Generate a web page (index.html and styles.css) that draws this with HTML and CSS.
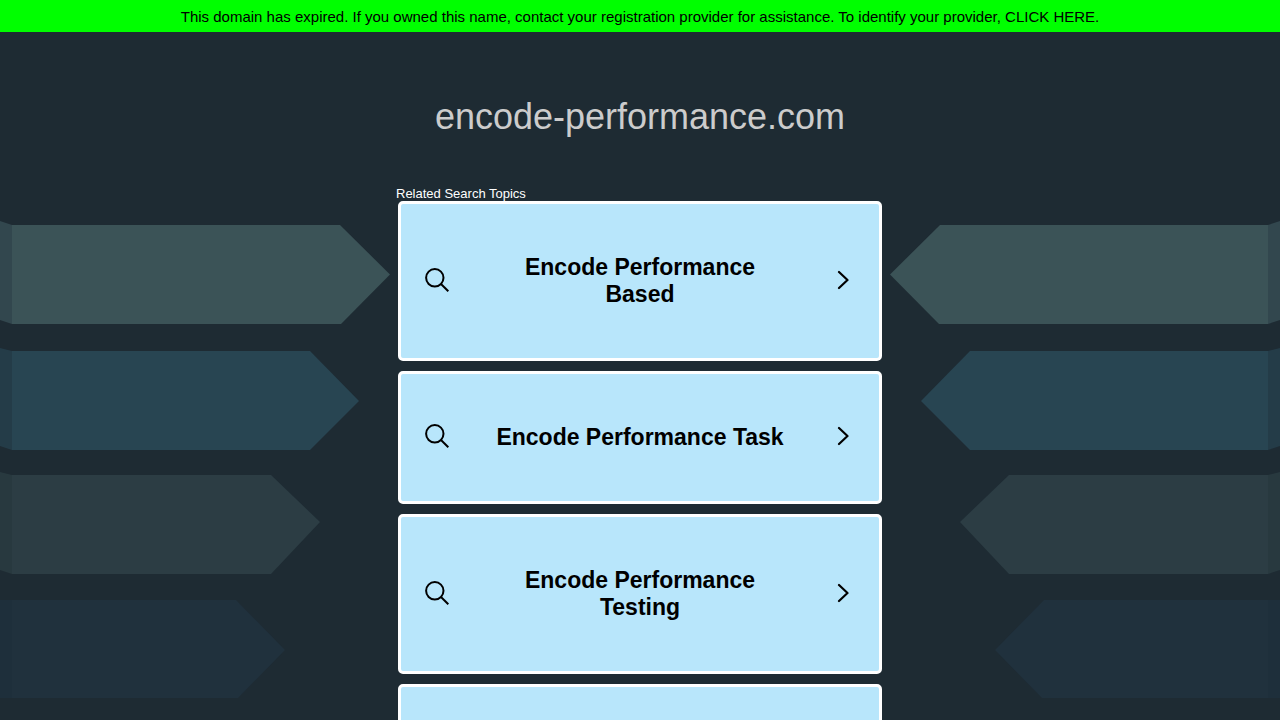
FILE: index.html
```html
<!DOCTYPE html>
<html lang="en">
<head>
    <meta charset="UTF-8">
    <meta name="viewport" content="width=device-width, initial-scale=1.0">
    <title>encode-performance.com</title>
    <link rel="stylesheet" href="styles.css">
</head>
<body>
    <!-- shared shapes -->
    <svg class="defs" width="0" height="0" aria-hidden="true">
        <symbol id="arrows" viewBox="0 0 390 480">
            <path fill="#32474e" d="M0 1l12 4v99l-12-4z"/>
            <path fill="#3b5357" d="M12 5h328l50 49.500-49 49.500H12z"/>
            <path fill="#243c48" d="M0 128l12 3v99l-12-4z"/>
            <path fill="#284552" d="M12 131h298l49 50-49 49H12z"/>
            <path fill="#28393f" d="M0 252l12 3v99l-12-4z"/>
            <path fill="#2c3d44" d="M12 255h259l49 47-49 52H12z"/>
            <path fill="#1e2f3b" d="M0 380h12v98H0z"/>
            <path fill="#20313d" d="M12 380h224l49 50-47 48H12z"/>
        </symbol>
        <symbol id="search" viewBox="0 0 24 24">
            <circle cx="9.800" cy="9.800" r="8.700" fill="none" stroke="#000" stroke-width="2"/>
            <path d="M16 16l7.300 7.300" fill="none" stroke="#000" stroke-width="2"/>
        </symbol>
        <symbol id="chevron" viewBox="0 0 12 20">
            <path d="M2 2l8.500 8L2 18" fill="none" stroke="#000" stroke-width="2.200" stroke-linecap="round" stroke-linejoin="round"/>
        </symbol>
    </svg>

    <div class="banner">
        This domain has expired. If you owned this name, contact your registration provider for assistance. To identify your provider, <a href="#">CLICK HERE.</a>
    </div>

    <main class="page">
        <svg class="arrows arrows-left" aria-hidden="true"><use href="#arrows"/></svg>
        <svg class="arrows arrows-right" aria-hidden="true"><use href="#arrows"/></svg>

        <h1 class="domain">encode-performance.com</h1>

        <div class="topics">
            <h2 class="topics-title">Related Search Topics</h2>
            <a class="topic" href="#">
                <svg class="icon-search" aria-hidden="true"><use href="#search"/></svg>
                <span class="topic-text">Encode Performance Based</span>
                <svg class="icon-chevron" aria-hidden="true"><use href="#chevron"/></svg>
            </a>
            <a class="topic" href="#">
                <svg class="icon-search" aria-hidden="true"><use href="#search"/></svg>
                <span class="topic-text">Encode Performance Task</span>
                <svg class="icon-chevron" aria-hidden="true"><use href="#chevron"/></svg>
            </a>
            <a class="topic" href="#">
                <svg class="icon-search" aria-hidden="true"><use href="#search"/></svg>
                <span class="topic-text">Encode Performance Testing</span>
                <svg class="icon-chevron" aria-hidden="true"><use href="#chevron"/></svg>
            </a>
            <a class="topic" href="#">
                <svg class="icon-search" aria-hidden="true"><use href="#search"/></svg>
                <span class="topic-text">Encode Performance Test</span>
                <svg class="icon-chevron" aria-hidden="true"><use href="#chevron"/></svg>
            </a>
        </div>
    </main>
</body>
</html>
```
FILE: styles.css
```css
body {
    margin: 0;
    background-color: #1e2b33;
    font-family: Arial, "Liberation Sans", sans-serif;
}
.defs {
    position: absolute;
}
.banner {
    background-color: #00ff00;
    color: #000;
    padding: 9px 8px 7px;
    font-size: 15px;
    line-height: 16px;
    text-align: center;
}
.banner a {
    color: #000;
    text-decoration: none;
}
.page {
    position: relative;
    overflow: hidden;
    padding: 64px 0 10px;
}
/* decoration behind the list */
.arrows {
    position: absolute;
    top: 188px;
    width: 390px;
    height: 480px;
}
.arrows-left {
    left: 0;
}
.arrows-right {
    right: 0;
    transform: scaleX(-1);
}
.domain {
    margin: 0 0 48px;
    color: #ccc;
    font-size: 36px;
    font-weight: normal;
    line-height: 42px;
    text-align: center;
}
.topics {
    position: relative;
    display: flex;
    flex-direction: column;
    gap: 10px;
    max-width: 484px;
    margin: 0 auto;
}
.topics-title {
    margin: 0 -2px -10px;
    color: #fff;
    font-size: 13px;
    font-weight: normal;
    line-height: 15px;
}
.topic {
    display: grid;
    grid-template-columns: 68px 1fr 62px;
    align-items: center;
    padding: 50px 30px 50px 24px;
    border: 3px solid #fff;
    border-radius: 5px;
    background-color: #b8e6fb;
    color: #000;
    font-size: 23px;
    font-weight: bold;
    line-height: 27px;
    text-align: center;
    text-decoration: none;
}
.icon-search {
    width: 24px;
    height: 24px;
    margin-bottom: 3px;
}
.icon-chevron {
    width: 12px;
    height: 20px;
    margin-bottom: 3px;
    justify-self: end;
}
```
